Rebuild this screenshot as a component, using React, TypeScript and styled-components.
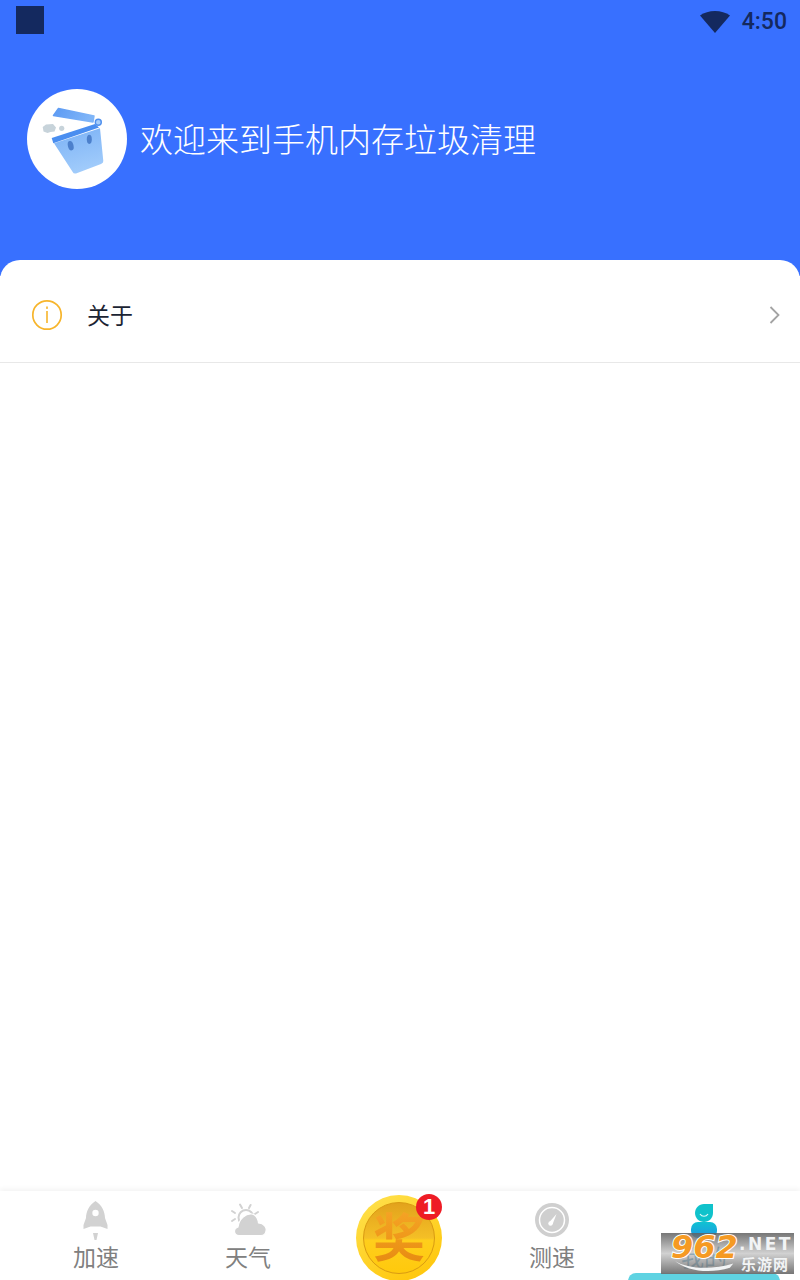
import React from 'react';

import styled, { createGlobalStyle } from 'styled-components';

const FONT = `"Noto Sans CJK SC", "Noto Sans", sans-serif`;

const GlobalStyle = createGlobalStyle`
  html, body {
    margin: 0;
    padding: 0;
    background: #fff;
    font-family: ${FONT};
  }
`;

const TABS = [
  { key: 'boost', label: '加速', icon: <RocketIcon /> },
  { key: 'weather', label: '天气', icon: <WeatherIcon /> },
  { key: 'prize', label: '', icon: null },
  { key: 'speed', label: '测速', icon: <GaugeIcon /> },
  { key: 'mine', label: '我的', icon: <PersonIcon /> },
];

export default function App() {
  return (
    <Page>
      <GlobalStyle />
      <Hero>
        <StatusBar>
          <StatusSquare />
          <StatusRight>
            <WifiIcon />
            <Clock>4:50</Clock>
          </StatusRight>
        </StatusBar>
        <Welcome>
          <Avatar>
            <BinLogo />
          </Avatar>
          <WelcomeText>欢迎来到手机内存垃圾清理</WelcomeText>
        </Welcome>
      </Hero>

      <Sheet>
        <MenuRow>
          <InfoIcon />
          <MenuLabel>关于</MenuLabel>
          <Chevron />
        </MenuRow>
      </Sheet>

      <TabBar>
        {TABS.map((tab) =>
          tab.key === 'prize' ? (
            <PrizeTab key={tab.key}>
              <Coin />
              <Badge>1</Badge>
            </PrizeTab>
          ) : (
            <Tab key={tab.key}>
              <TabIcon>{tab.icon}</TabIcon>
              <TabLabel $active={tab.key === 'mine'}>{tab.label}</TabLabel>
            </Tab>
          ),
        )}
        <ActiveBar />
        <Watermark>
          <WatermarkNum>962</WatermarkNum>
          <WatermarkNet>.NET</WatermarkNet>
          <WatermarkSite>乐游网</WatermarkSite>
          <WatermarkSwoosh viewBox="0 0 70 14">
            <path d="M0 0 C14 9 42 11 68 3 L64 8 C40 15 14 12 0 0Z" fill="#f2f4f5" />
          </WatermarkSwoosh>
        </Watermark>
      </TabBar>
    </Page>
  );
}

function WifiIcon() {
  return (
    <svg width="30" height="24" viewBox="0 0 30 24">
      <path d="M0 6.500 C8 0.500 22 0.500 30 6.500 L15 24Z" fill="#14295f" />
    </svg>
  );
}

function BinLogo() {
  return (
    <svg width="100" height="100" viewBox="0 0 100 100">
      <defs>
        <linearGradient id="binBody" x1="0.3" y1="0" x2="0.6" y2="1">
          <stop offset="0" stopColor="#7db3f6" />
          <stop offset="1" stopColor="#a3cdfb" />
        </linearGradient>
        <linearGradient id="binLid" x1="0" y1="0" x2="1" y2="0.2">
          <stop offset="0" stopColor="#5c9af3" />
          <stop offset="1" stopColor="#7fb5f8" />
        </linearGradient>
      </defs>
      <path
        d="M26.500 26.500 L31.500 19.500 L67 27 L66 33Z"
        fill="url(#binLid)"
        stroke="url(#binLid)"
        strokeWidth="1.500"
        strokeLinejoin="round"
      />
      <path d="M27 54.300 L73 39.300 L76.300 72 Q76.500 74 74 75 L49 84.500 Q46.500 85 45.700 83Z" fill="url(#binBody)" />
      <path d="M24.700 49 L68 35 L72 38.500 L26.300 54.300Z" fill="#4a8ef0" />
      <circle cx="71.300" cy="33.300" r="3" fill="#a6cdfa" stroke="#4f90ee" strokeWidth="1.400" />
      <ellipse cx="43.700" cy="56.700" rx="2.800" ry="4.800" transform="rotate(-14 43.700 56.700)" fill="#4c80cc" />
      <ellipse cx="62.300" cy="50.300" rx="2.500" ry="4.600" fill="#4c80cc" />
      <path d="M15.700 38 L19 35.500 L26 35 L29 38.500 L27.500 42.500 L23.500 43 L20.500 44 L16.500 42.500Z" fill="#c7d3da" />
      <circle cx="34.700" cy="39.300" r="2.600" fill="#c7d3da" />
    </svg>
  );
}

function InfoIcon() {
  return (
    <InfoSvg width="32" height="32" viewBox="0 0 32 32">
      <circle cx="16" cy="16" r="14.200" fill="none" stroke="#f7b52c" strokeWidth="1.700" />
      <rect x="15.200" y="7.500" width="1.600" height="2.400" fill="#f7b52c" />
      <rect x="15.200" y="12" width="1.600" height="12" fill="#f7b52c" />
    </InfoSvg>
  );
}

function Chevron() {
  return (
    <ChevronSvg width="12" height="20" viewBox="0 0 12 20">
      <path d="M1.500 2 L9.500 10 L1.500 18" fill="none" stroke="#a3a3a3" strokeWidth="1.800" />
    </ChevronSvg>
  );
}

function RocketIcon() {
  return (
    <svg width="30" height="40" viewBox="0 0 30 40">
      <path
        d="M14.500 0 C21 4 24 11 24 17 L26.500 24 L26.500 28 L19.500 25.500 L9.500 25.500 L2.500 28 L2.500 24 L5 17 C5 11 8 4 14.500 0Z"
        fill="#d2d2d2"
      />
      <circle cx="14.500" cy="12" r="3.200" fill="#fff" />
      <path d="M12 32 L17 32 L15.500 39 L13.500 39Z" fill="#d2d2d2" />
    </svg>
  );
}

function WeatherIcon() {
  return (
    <svg width="38" height="40" viewBox="0 -3 38 40">
      <g stroke="#d2d2d2" strokeWidth="2" strokeLinecap="round">
        <path d="M11 0.500 L13 4" />
        <path d="M21.600 1 L20 4" />
        <path d="M3 7 L6 9" />
        <path d="M3 17 L6 15" />
        <path d="M29 8 L26 10" />
      </g>
      <circle cx="17" cy="13.500" r="7.500" fill="none" stroke="#d2d2d2" strokeWidth="2" />
      <path
        d="M10 31.500 C5 31.500 3.500 25 9 23 C10 15 17 9 23 10 C27 11 29 15 29.500 19 C35 19 38 24 37 27 C36.500 30 35 31.500 32 31.500Z"
        fill="#d2d2d2"
        stroke="#fff"
        strokeWidth="1.200"
      />
    </svg>
  );
}

function GaugeIcon() {
  return (
    <svg width="34" height="40" viewBox="0 -2 34 40">
      <circle cx="17" cy="17" r="17" fill="#cfcfcf" />
      <circle cx="17" cy="17" r="12.500" fill="none" stroke="#fff" strokeWidth="1.500" />
      <path d="M14.500 19 L21.500 11 L17.500 21.500Z" fill="#fff" />
      <circle cx="15.500" cy="20.500" r="2.200" fill="#fff" />
    </svg>
  );
}

function PersonIcon() {
  return (
    <svg width="28" height="40" viewBox="0 -3 28 40">
      <defs>
        <linearGradient id="personBody" x1="0" y1="0" x2="0" y2="1">
          <stop offset="0" stopColor="#0fc2d2" />
          <stop offset="1" stopColor="#2196e3" />
        </linearGradient>
      </defs>
      <path d="M14 0 L23 0 L23 9 C23 14 19 18 14 18 C9 18 5 14 5 9 C5 4 9 0 14 0Z" fill="#10c2cb" />
      <path d="M10 10 C12 13 16 13 18 10" fill="none" stroke="#dff8f8" strokeWidth="1.200" />
      <rect x="1" y="18" width="26" height="16" rx="7" fill="url(#personBody)" />
    </svg>
  );
}

function Coin() {
  return (
    <CoinSvg width="86" height="86" viewBox="0 0 86 86">
      <defs>
        <linearGradient id="coinOuter" x1="0.200" y1="0" x2="0.800" y2="1">
          <stop offset="0" stopColor="#ffe04a" />
          <stop offset="1" stopColor="#ffc60a" />
        </linearGradient>
        <linearGradient id="coinInner" x1="0" y1="0" x2="0" y2="1">
          <stop offset="0" stopColor="#e2a21c" />
          <stop offset="0.500" stopColor="#f4bf26" />
          <stop offset="0.530" stopColor="#ffce1c" />
          <stop offset="1" stopColor="#ffc90c" />
        </linearGradient>
        <linearGradient id="coinGlyph" x1="0" y1="0" x2="0" y2="1">
          <stop offset="0" stopColor="#f8a82a" />
          <stop offset="0.500" stopColor="#f09a1c" />
          <stop offset="1" stopColor="#e4860e" />
        </linearGradient>
      </defs>
      <circle cx="43" cy="43" r="43" fill="url(#coinOuter)" />
      <circle cx="43" cy="43" r="35.500" fill="url(#coinInner)" stroke="#d99a12" strokeWidth="1" />
      <text
        x="43"
        y="62"
        textAnchor="middle"
        fontFamily={FONT}
        fontSize="52"
        fontWeight="700"
        fill="url(#coinGlyph)"
      >
        奖
      </text>
    </CoinSvg>
  );
}

const Page = styled.div`
  position: relative;
  display: flex;
  flex-direction: column;
  width: 800px;
  height: 1280px;
  overflow: hidden;
  background: #fff;
`;

const Hero = styled.header`
  flex: 0 0 276px;
  background: #3870ff;
`;

const StatusBar = styled.div`
  display: flex;
  align-items: flex-start;
  justify-content: space-between;
  height: 89px;
  padding: 6px 13px 0 16px;
  box-sizing: border-box;
`;

const StatusSquare = styled.div`
  width: 28px;
  height: 28px;
  background: #14295f;
`;

const StatusRight = styled.div`
  display: flex;
  align-items: center;
  gap: 12px;
  height: 30px;
`;

const Clock = styled.span`
  font-family: Roboto, sans-serif;
  font-size: 23px;
  font-weight: 500;
  color: #14295f;
`;

const Welcome = styled.div`
  display: flex;
  align-items: center;
  gap: 13px;
  padding-left: 27px;
`;

const Avatar = styled.div`
  display: flex;
  width: 100px;
  height: 100px;
  border-radius: 50%;
  background: #fff;
`;

const WelcomeText = styled.h1`
  margin: 0 0 1px;
  font-size: 33px;
  font-weight: 300;
  line-height: 99px;
  color: #fff;
`;

const Sheet = styled.main`
  flex: 1;
  position: relative;
  margin-top: -16px;
  border-radius: 20px 20px 0 0;
  background: #fff;
`;

const MenuRow = styled.div`
  display: flex;
  align-items: center;
  height: 103px;
  padding: 8px 19px 0 31px;
  box-sizing: border-box;
  border-bottom: 1px solid #e8e8e8;
`;

const InfoSvg = styled.svg`
  flex: none;
`;

const MenuLabel = styled.span`
  flex: 1;
  margin: -2px 0 0 24px;
  font-size: 23px;
  color: #1b2433;
`;

const ChevronSvg = styled.svg`
  flex: none;
`;

const TabBar = styled.nav`
  position: relative;
  display: grid;
  grid-template-columns: repeat(5, 152px);
  grid-template-rows: 89px;
  flex: 0 0 89px;
  padding: 0 20px;
  background: #fff;
  box-shadow: 0 -2px 5px rgba(0, 0, 0, 0.05);
`;

const Tab = styled.div`
  display: flex;
  flex-direction: column;
  align-items: center;
`;

const TabIcon = styled.div`
  display: flex;
  justify-content: center;
  height: 40px;
  padding-top: 10px;
`;

const TabLabel = styled.span<{ $active?: boolean }>`
  margin-top: -3px;
  font-size: 23px;
  line-height: 36px;
  color: ${({ $active }) => ($active ? '#2a7fa8' : '#808080')};
`;

const PrizeTab = styled.div`
  position: relative;
  left: -1px;
  display: flex;
  justify-content: center;
  padding-top: 4px;
`;

const CoinSvg = styled.svg`
  flex: none;
`;

const Badge = styled.span`
  position: absolute;
  top: 3px;
  left: 93px;
  width: 26px;
  height: 26px;
  border-radius: 50%;
  background: #ee1c25;
  color: #fff;
  font-family: "Liberation Sans", sans-serif;
  font-size: 22px;
  font-weight: 700;
  line-height: 26px;
  text-align: center;
`;

const ActiveBar = styled.div`
  position: absolute;
  left: 628px;
  bottom: -6px;
  width: 152px;
  height: 13px;
  border-radius: 8px 8px 0 0;
  background: #5fd3e2;
`;

const Watermark = styled.div`
  position: absolute;
  left: 661px;
  top: 42px;
  width: 133px;
  height: 41px;
  overflow: hidden;
  background: linear-gradient(rgba(95, 95, 95, 0.85), rgba(190, 190, 190, 0.7) 50%, rgba(110, 110, 110, 0.95));
`;

const WatermarkNum = styled.span`
  position: absolute;
  left: 10px;
  top: -4px;
  font-family: "DejaVu Sans", sans-serif;
  font-size: 32px;
  font-weight: 700;
  font-style: italic;
  line-height: 36px;
  color: #f59a23;
  -webkit-text-stroke: 2px #fff;
  paint-order: stroke fill;
`;

const WatermarkNet = styled.span`
  position: absolute;
  left: 78px;
  top: -2px;
  font-family: "DejaVu Sans", sans-serif;
  font-size: 17px;
  font-weight: 700;
  letter-spacing: 2.500px;
  line-height: 26px;
  color: #f2f4f5;
`;

const WatermarkSite = styled.span`
  position: absolute;
  left: 80px;
  top: 23px;
  font-size: 15px;
  font-weight: 700;
  letter-spacing: 1px;
  line-height: 16px;
  color: #f2f4f5;
`;

const WatermarkSwoosh = styled.svg`
  position: absolute;
  left: 9px;
  top: 28px;
  width: 70px;
  height: 12px;
`;
